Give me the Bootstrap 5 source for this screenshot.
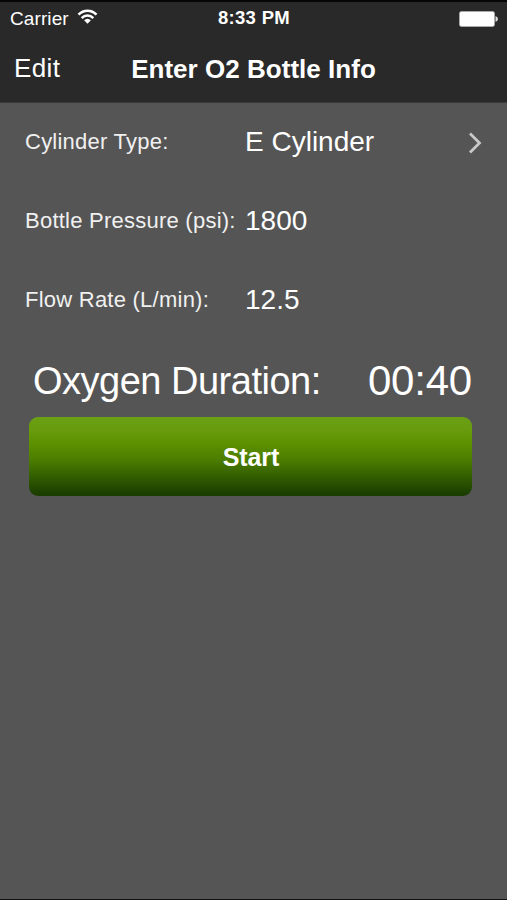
<!DOCTYPE html>
<html lang="en">
<head>
<meta charset="utf-8">
<meta name="viewport" content="width=device-width, initial-scale=1">
<title>Enter O2 Bottle Info</title>
<link href="https://cdn.jsdelivr.net/npm/bootstrap@5.3.0/dist/css/bootstrap.min.css" rel="stylesheet">
<style>
body { font-family: "Liberation Sans", Arial, sans-serif; background: #555; color: #fff; }
.screen { height: 900px; border-top: 2px solid #050505; border-bottom: 1px solid #111; }
.top-area { background: #292929; height: 101px; border-bottom: 1px solid #3a3a3a; }
.status-row { height: 33px; padding: 0 9px 0 10px; }
.carrier { font-size: 19px; letter-spacing: .1px; }
.clock { font-size: 18.5px; letter-spacing: .3px; }
.title-row { height: 68px; padding: 0 14px; }
.edit-btn { font-size: 26px; letter-spacing: .4px; }
.title-text { font-size: 26px; letter-spacing: .03px; }
.side { flex: 1 1 0; }
.fields { margin-top: -1px; }
.field-row { height: 79px; padding: 0 25px; }
.field-label { width: 220px; font-size: 22px; letter-spacing: .24px; color: #f0f0f0; }
.field-value { font-size: 28px; }
.chevron { margin-top: 2px; }
.duration-row { height: 78px; padding: 6px 35px 0 33px; }
.duration-label { font-size: 38px; letter-spacing: -.5px; }
.duration-value { font-size: 42px; letter-spacing: -.2px; }
.start-row { padding-left: 29.4px; }
.btn-start { height: 79px; width: 443px; padding: 2px 0 0; border-radius: 9px; font-size: 25px; letter-spacing: -.1px;
  background: linear-gradient(#6ba015 0%, #689c0e 16%, #5f9200 32%, #4b7c00 55%, #2f5a00 78%, #1b3e00 97%, #1b3e00 100%); }
</style>
</head>
<body>
<div class="screen d-flex flex-column overflow-hidden">
  <header class="top-area">
    <div class="status-row d-flex align-items-center">
      <div class="side d-flex align-items-center gap-2">
        <span class="carrier lh-1">Carrier</span>
        <svg class="mb-1" width="21" height="16" viewBox="0 0 20 16" fill="none" stroke="#fff" stroke-width="2.5" aria-hidden="true">
          <path d="M1 5.6C6 .4 14 .4 19 5.6"/><path d="M4.2 9.1C7.5 5.6 12.5 5.6 15.8 9.1"/>
          <path d="M6.6 11.3Q10 8.3 13.4 11.3L10 14.8Z" fill="#fff" stroke="none"/>
        </svg>
      </div>
      <span class="clock lh-1 fw-bold">8:33 PM</span>
      <div class="side d-flex justify-content-end">
        <svg width="39" height="16" viewBox="0 0 39 16" aria-hidden="true">
          <rect x=".5" y=".5" width="35" height="15" rx="2" fill="#fff" stroke="#aaa"/>
          <path d="M36.5 5Q39 6 39 8T36.5 11Z" fill="#ddd"/>
        </svg>
      </div>
    </div>
    <div class="title-row d-flex align-items-center">
      <div class="side"><span class="edit-btn lh-1">Edit</span></div>
      <h1 class="title-text fw-bold lh-1 m-0">Enter O2 Bottle Info</h1>
      <div class="side"></div>
    </div>
  </header>
  <main class="fields">
    <div class="field-row d-flex align-items-center">
      <span class="field-label lh-1">Cylinder Type:</span>
      <span class="field-value lh-1">E Cylinder</span>
      <svg class="chevron ms-auto" width="14" height="22" viewBox="0 0 14 22" fill="none" stroke="#c8c8c8" stroke-width="2.8" aria-hidden="true"><path d="M2 1.5L11.5 11L2 20.5"/></svg>
    </div>
    <div class="field-row d-flex align-items-center">
      <span class="field-label lh-1">Bottle Pressure (psi):</span>
      <span class="field-value lh-1">1800</span>
    </div>
    <div class="field-row d-flex align-items-center">
      <span class="field-label lh-1">Flow Rate (L/min):</span>
      <span class="field-value lh-1">12.5</span>
    </div>
    <div class="duration-row d-flex align-items-center justify-content-between">
      <span class="duration-label lh-1">Oxygen Duration:</span>
      <span class="duration-value lh-1">00:40</span>
    </div>
    <div class="start-row">
      <button type="button" class="btn btn-start border-0 text-white fw-bold">Start</button>
    </div>
  </main>
</div>
</body>
</html>
